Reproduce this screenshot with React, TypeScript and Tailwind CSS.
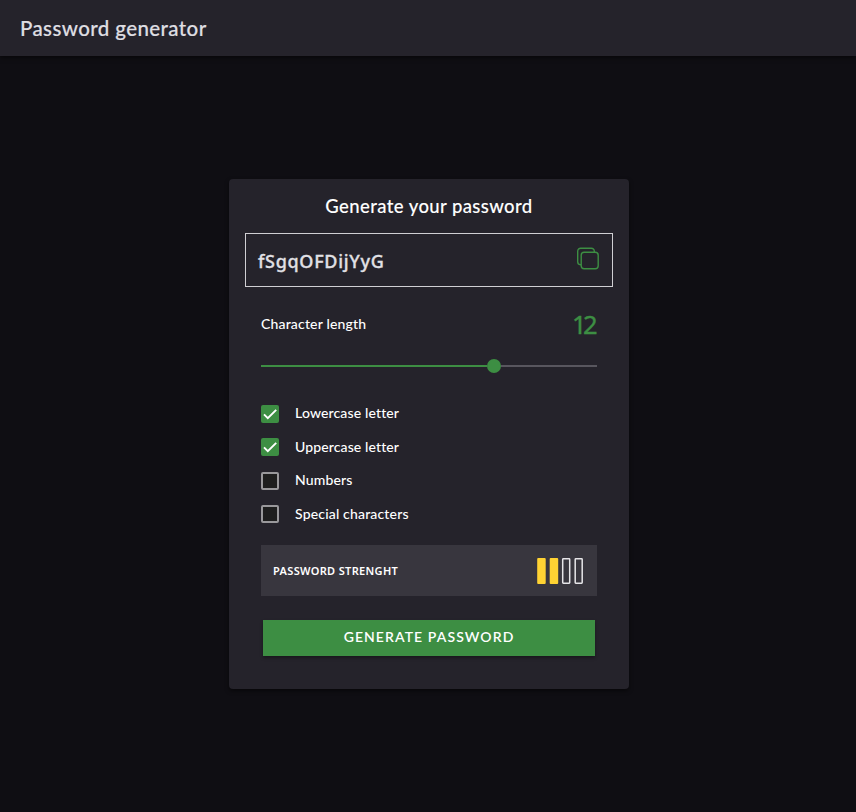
const options = [
  { label: "Lowercase letter", checked: true, spacing: "tracking-[0.14px]" },
  { label: "Uppercase letter", checked: true, spacing: "tracking-[0.12px]" },
  { label: "Numbers", checked: false, spacing: "tracking-[0.15px]" },
  { label: "Special characters", checked: false, spacing: "tracking-[0.17px]" },
];

function CopyIcon() {
  return (
    <svg width="24" height="24" viewBox="0 0 24 24" fill="none" stroke="#3d8e43" strokeWidth="1.4">
      <rect x="5.2" y="5.2" width="17" height="16.6" rx="3" />
      <path d="M5 17.8H4.5a3 3 0 0 1-2.8-3V4.2a3 3 0 0 1 3-3h10.6a3 3 0 0 1 3 3v.8" />
    </svg>
  );
}

function Check({ checked }: { checked: boolean }) {
  if (!checked) {
    return <span className="size-[18px] rounded-[2px] border-2 border-[#99989b] bg-[#1e1e1e]" />;
  }
  return (
    <span className="size-[18px] rounded-[2px] bg-[#3d8e43]">
      <svg width="18" height="18" viewBox="0 0 18 18" fill="none" stroke="#fff" strokeWidth="1.9">
        <path d="M3 9.4 6.8 13.2 15.2 4.8" />
      </svg>
    </span>
  );
}

export default function App() {
  return (
    <div className="flex h-[812px] w-[856px] flex-col bg-[#0f0e13] font-['Lato',sans-serif] text-white">
      <header className="flex h-14 shrink-0 items-center bg-[#25232b] px-5 shadow-[0_2px_4px_rgba(0,0,0,0.5)]">
        <h1 className="text-[20.5px] font-medium leading-7 tracking-[0.4px] text-[#dfdee2] [-webkit-text-stroke:0.2px_#dfdee2]">Password generator</h1>
      </header>
      <main className="flex flex-1 pl-[229px] pt-[123px]">
        <section className="flex h-[510px] w-[400px] flex-col rounded-[4px] bg-[#25232b] px-4 shadow-[0_2px_4px_rgba(0,0,0,0.5)]">
          <h2 className="mt-[13px] h-7 text-center text-[18.5px] font-medium leading-7 tracking-[0.4px] [-webkit-text-stroke:0.1px_#fff]">Generate your password</h2>
          <div className="mt-[13px] flex h-[54px] items-center justify-between border border-[#d0cfd3] pl-3 pr-3">
            <span className="pt-0.5 font-['Noto_Sans',sans-serif] text-[18px] font-medium tracking-[0.68px] text-[#e1e0e5] [-webkit-text-stroke:0.3px_#e1e0e5]">fSgqOFDijYyG</span>
            <span className="mb-0.5"><CopyIcon /></span>
          </div>
          <div className="flex flex-col px-4">
            <div className="mt-[17px] flex h-10 items-center justify-between">
              <span className="pb-0.5 text-[14px] font-medium tracking-[0.17px]">Character length</span>
              <span className="mr-[3px] font-['Noto_Sans',sans-serif] text-[25.5px] tracking-[-3.6px] text-[#3d8e43] [-webkit-text-stroke:0.4px_#3d8e43]">12</span>
            </div>
            <div className="mt-[14px] flex h-4 items-center">
              <div className="h-[2px] w-[226px] bg-[#3d8e43]" />
              <div className="size-[14px] rounded-full bg-[#3d8e43]" />
              <div className="h-[2px] flex-1 bg-[#58565e]" />
            </div>
            <div className="mt-[23px] flex flex-col">
              {options.map((o) => (
                <label key={o.label} className="flex h-[33.5px] items-center gap-4">
                  <Check checked={o.checked} />
                  <span className={`pb-0.5 text-[14px] font-medium ${o.spacing}`}>{o.label}</span>
                </label>
              ))}
            </div>
            <div className="mt-[14px] flex h-[51px] items-center justify-between bg-[#38363e] pl-3 pr-[13px]">
              <span className="pt-0.5 font-['Noto_Sans',sans-serif] text-[11px] font-semibold tracking-[0.33px]">PASSWORD STRENGHT</span>
              <svg width="47" height="28" viewBox="0 0 47 28" fill="none">
                <rect x="0.2" y="1" width="8.5" height="26" rx="1" fill="#ffd333" />
                <rect x="12.7" y="1" width="8.5" height="26" rx="1" fill="#ffd333" />
                <rect x="25.7" y="1.8" width="7" height="24.4" rx="0.6" stroke="#e6e5e8" strokeWidth="1.5" />
                <rect x="38.2" y="1.8" width="7" height="24.4" rx="0.6" stroke="#e6e5e8" strokeWidth="1.5" />
              </svg>
            </div>
            <button className="mx-0.5 mt-6 h-9 bg-[#3d8e43] pb-[3px] text-[14px] font-semibold tracking-[1.08px] shadow-[0_2px_3px_rgba(0,0,0,0.35)]">GENERATE PASSWORD</button>
          </div>
        </section>
      </main>
    </div>
  );
}
